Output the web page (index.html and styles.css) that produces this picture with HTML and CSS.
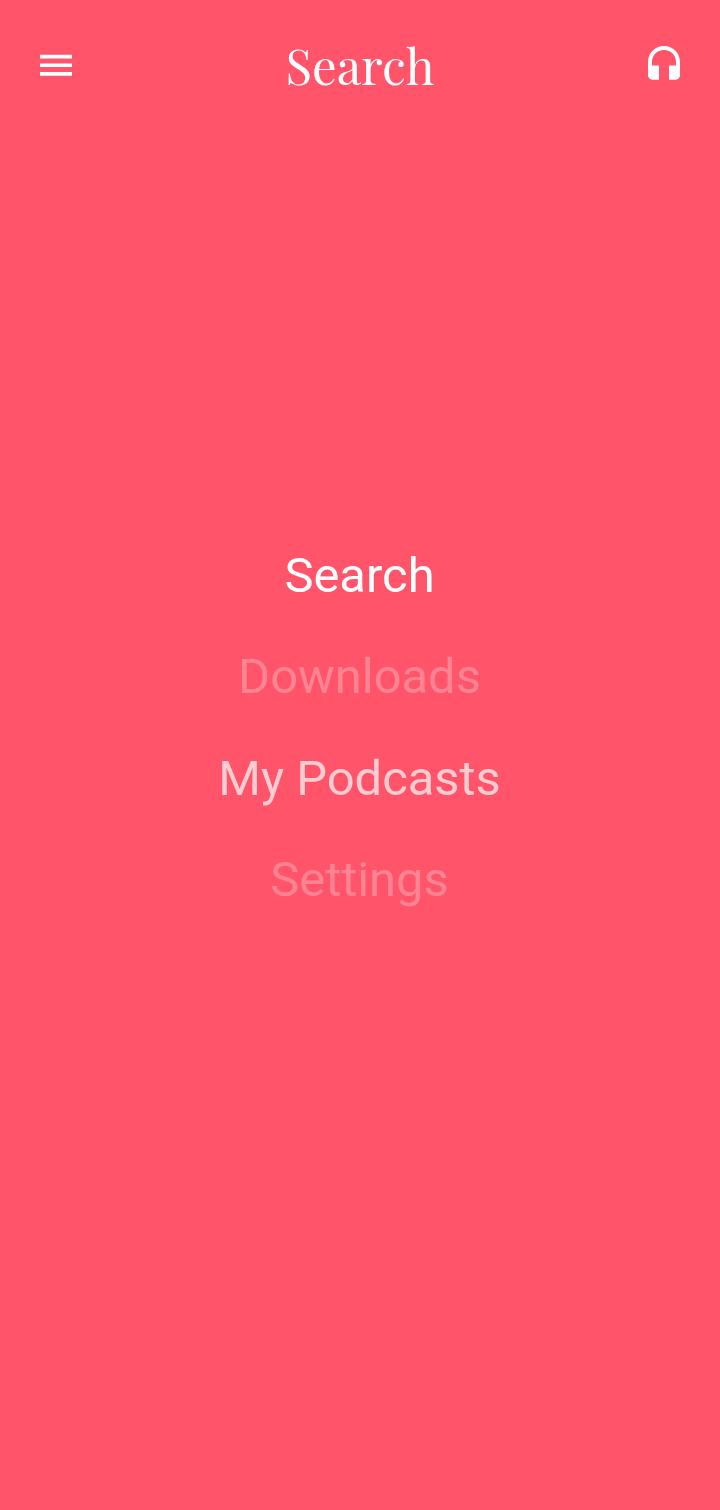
FILE: index.html
```html
<!DOCTYPE html>
<html lang="en">
<head>
<meta charset="utf-8">
<title>Search</title>
<link rel="stylesheet" href="styles.css">
</head>
<body>
<header class="topbar">
  <button class="icon-button" aria-label="Menu">
    <svg class="icon" viewBox="0 0 48 48"><path d="M8 13.7h32v3.7H8zM8 22.4h32v3.7H8zM8 31.1h32v3.7H8z"/></svg>
  </button>
  <h1 class="title">Search</h1>
  <button class="icon-button" aria-label="Player">
    <svg class="icon" viewBox="0 0 48 48"><path d="M24 5C15 5 8 12 8 21v13c0 3 2 4.700 5 4.700h6V24.500h-7v-3.500c0-7 5-12 12-12s12 5 12 12v3.500h-7v14.200h6c3 0 5-1.700 5-4.700V21C40 12 33 5 24 5z"/></svg>
  </button>
</header>
<nav class="menu">
  <a class="item active">Search</a>
  <a class="item faint">Downloads</a>
  <a class="item soft">My Podcasts</a>
  <a class="item faint">Settings</a>
</nav>
</body>
</html>
```
FILE: styles.css
```css
body {
  margin: 0;
  height: 1510px;
  background: #ff5469;
  color: #fff;
  font-family: Roboto, sans-serif;
}

.topbar {
  display: flex;
  justify-content: space-between;
  padding: 41px 32px 0;
  height: 90px;
}

.icon-button {
  width: 48px;
  height: 48px;
  padding: 0;
  border: 0;
  background: none;
}

.icon {
  display: block;
  width: 48px;
  height: 48px;
  fill: #fff;
}

.title {
  margin: 0;
  font: 400 49px/48px "Playfair Display", "Liberation Serif", serif;
}

.menu {
  display: flex;
  flex-direction: column;
  align-items: center;
  padding: 393.75px 1px 0 0;
}

.item {
  height: 101.5px;
  font-size: 48.9px;
  line-height: 101.5px;
}

.soft {
  opacity: 0.7;
}

.faint {
  opacity: 0.28;
}
```
